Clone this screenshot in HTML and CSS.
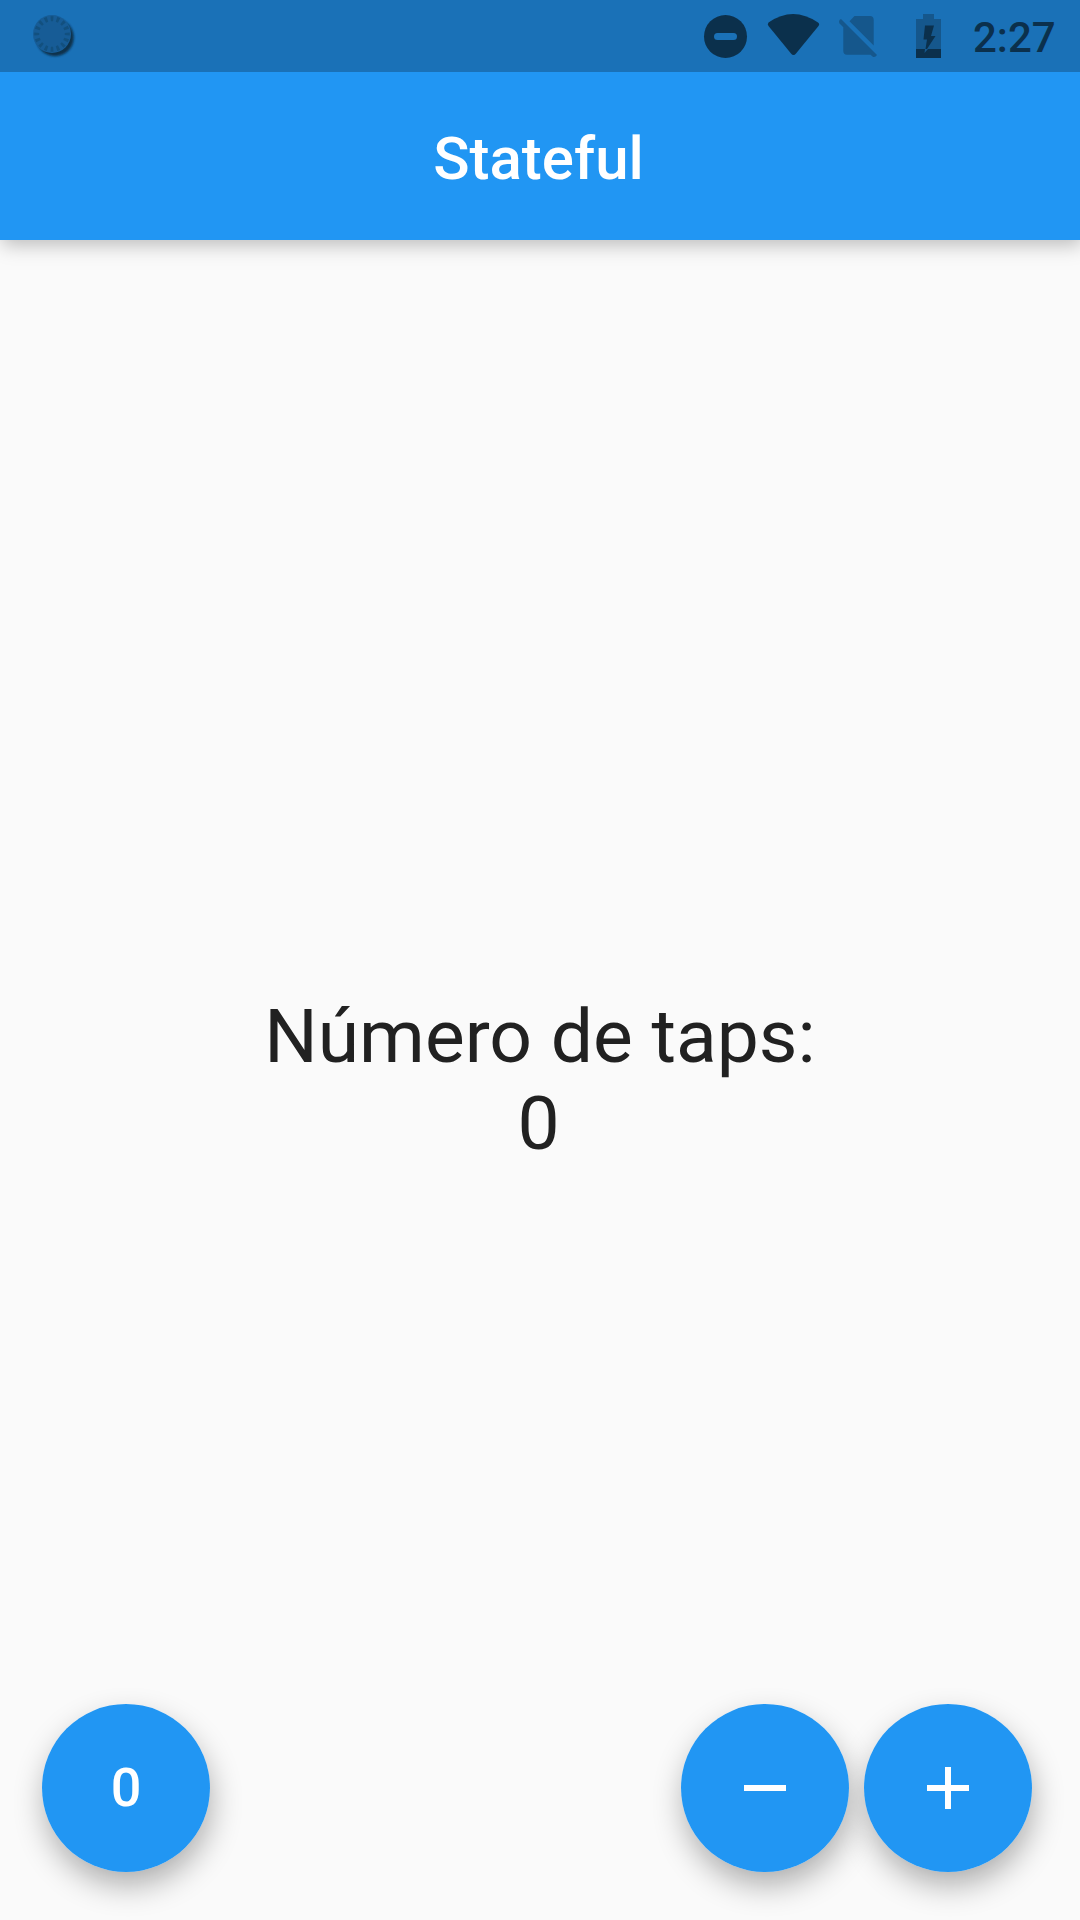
FILE: index.html
```html
<!DOCTYPE html>
<html lang="pt">
<head>
<meta charset="utf-8">
<title>Stateful</title>
<link rel="stylesheet" href="styles.css">
</head>
<body>
<div class="screen">
  <div class="status-bar">
    <svg class="spinner" width="48" height="48" viewBox="0 0 48 48">
      <defs><filter id="soft" x="-20%" y="-20%" width="140%" height="140%"><feGaussianBlur stdDeviation="1"/></filter></defs>
      <circle class="spinner-shadow" cx="26" cy="25.5" r="18.8" filter="url(#soft)"/>
      <circle class="spinner-face" cx="23" cy="22" r="19"/>
      <circle class="spinner-ticks" cx="23" cy="22" r="15.3" pathLength="160"/>
    </svg>
    <div class="status-icons">
      <svg width="216" height="72" viewBox="690 0 216 72">
        <circle class="dark" cx="725.5" cy="36.5" r="21.5"/>
        <rect class="cutout" x="714" y="33" width="23" height="7" rx="3.5"/>
        <path class="dark" d="M768.500 22.500Q793 5.500 818 22.500Q820 24 818.500 26L796 53.500Q793.500 56.500 791 53.500L768.500 26Q767 24 768.500 22.500Z"/>
        <path class="faint" d="M854.500 16H870Q873.700 16 873.700 20V45.500L849.500 21.300ZM841 19L877 55Q875 58 872.500 56.500L870.500 54.700H847Q843.300 54.700 843.300 51V27.200L839.500 23.500Q838 20.500 841 19Z"/>
      </svg>
      <svg width="28" height="72" viewBox="914 0 28 72">
        <path class="faint" d="M923 14H934V19H941V49H916V19H923Z"/>
        <path class="dark" d="M925 25.500H934L931 36H935.500L927 49H941V58H916V49H925.500L927 39.500H923.500Z"/>
        <path class="faint" d="M925 49H928L924.500 53Z"/>
      </svg>
    </div>
    <span class="clock">2:27</span>
  </div>
  <header class="app-bar"><h1>Stateful</h1></header>
  <main class="content">
    <p>Número de taps:</p>
    <p class="count">0</p>
  </main>
  <footer class="actions">
    <button class="fab"><span class="fab-label">0</span></button>
    <div class="fab-group">
      <button class="fab" aria-label="Remover"><svg width="72" height="72" viewBox="0 0 24 24"><path d="M19 13H5v-2h14v2z"/></svg></button>
      <button class="fab" aria-label="Adicionar"><svg width="72" height="72" viewBox="0 0 24 24"><path d="M19 13h-6v6h-2v-6H5v-2h6V5h2v6h6v2z"/></svg></button>
    </div>
  </footer>
</div>
</body>
</html>
```
FILE: styles.css
```css
* {
  box-sizing: border-box;
}

body {
  margin: 0;
  font-family: Roboto, sans-serif;
  background: #fafafa;
}

.screen {
  width: 1080px;
  height: 1920px;
  display: flex;
  flex-direction: column;
  overflow: hidden;
}

.status-bar {
  height: 72px;
  flex: none;
  display: flex;
  align-items: center;
  background: #1a71b7;
  color: #0b304c;
}

.spinner {
  margin-left: 29px;
}

.spinner-shadow {
  fill: #0b304c;
}

.spinner-face {
  fill: #175c96;
}

.spinner-ticks {
  fill: none;
  stroke: #12507f;
  stroke-width: 5;
  stroke-dasharray: 4.5 5.5;
  stroke-dashoffset: 2.25;
}

.status-icons {
  display: flex;
  gap: 8px;
  margin-left: 613px;
}

.dark {
  fill: #0b304c;
}

.faint {
  fill: #15578c;
}

.cutout {
  fill: #1a71b7;
}

.clock {
  margin-left: 31px;
  padding-top: 2px;
  font-size: 42px;
  font-weight: 500;
}

.app-bar {
  height: 168px;
  flex: none;
  display: flex;
  align-items: center;
  justify-content: center;
  background: #2196f3;
  color: #fff;
  box-shadow: 2px 5px 18px rgba(0, 0, 0, 0.25);
  clip-path: inset(0 0 -40px 0);
}

.app-bar h1 {
  margin: 0;
  padding: 5px 3px 0 0;
  font-size: 60px;
  font-weight: 500;
}

.content {
  flex: 1;
  display: flex;
  flex-direction: column;
  align-items: center;
  justify-content: center;
  padding-top: 215px;
  color: #212121;
  font-size: 75px;
  line-height: 87px;
}

.content p {
  margin: 0;
}

.content .count {
  padding-right: 3px;
}

.actions {
  flex: none;
  display: flex;
  justify-content: space-between;
  padding: 0 48px 48px 42px;
  isolation: isolate;
}

.fab-group {
  display: flex;
  gap: 15px;
}

.fab {
  position: relative;
  width: 168px;
  height: 168px;
  display: flex;
  align-items: center;
  justify-content: center;
  padding: 0;
  border: 0;
  border-radius: 50%;
  background: #2196f3;
  color: #fff;
  fill: currentColor;
  font: 500 54px Roboto, sans-serif;
}

/* Shadows sit below every button, so neighbours never darken each other. */
.fab::before {
  content: "";
  position: absolute;
  inset: 0;
  z-index: -1;
  border-radius: 50%;
  box-shadow: 2px 14px 32px -2px rgba(0, 0, 0, 0.33);
}

.fab-label {
  padding-bottom: 2px;
}
```
